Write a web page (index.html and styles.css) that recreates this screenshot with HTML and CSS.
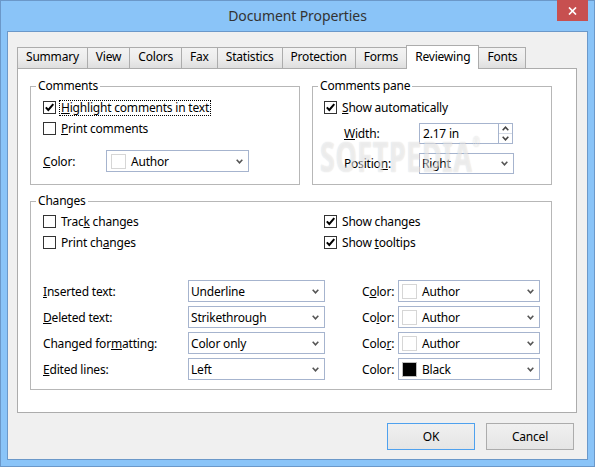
FILE: index.html
```html
<!DOCTYPE html>
<html lang="en">
<head>
  <meta charset="UTF-8" />
  <title>Document Properties</title>
  <link rel="stylesheet" href="styles.css">
</head>
<body>
  <div class="window">
    <div class="titlebar">
      <span class="title">Document Properties</span>
      <div class="close">
        <svg width="9" height="8" viewBox="0 0 9 8"><path d="M1 0.5 L8 7.5 M8 0.5 L1 7.5" stroke="#fff" stroke-width="1.7" fill="none"/></svg>
      </div>
    </div>

    <div class="client">
      <div class="tabs">
        <div class="tab">Summary</div>
        <div class="tab">View</div>
        <div class="tab">Colors</div>
        <div class="tab">Fax</div>
        <div class="tab">Statistics</div>
        <div class="tab">Protection</div>
        <div class="tab">Forms</div>
        <div class="tab active">Reviewing</div>
        <div class="tab">Fonts</div>
      </div>

      <div class="panel">
        <div class="top-row">
          <fieldset class="group group-comments">
            <legend>Comments</legend>
            <div class="comments-body">
              <div class="check-row">
                <span class="check on"><svg width="11" height="11" viewBox="0 0 11 11"><path d="M1.8 5.4 L4.3 8 L9.3 2.2" stroke="#000" stroke-width="2" fill="none"/></svg></span>
                <span class="check-label focus"><u>H</u>ighlight comments in text</span>
              </div>
              <div class="check-row">
                <span class="check"></span>
                <span class="check-label"><u>P</u>rint comments</span>
              </div>
              <div class="field-row color-row">
                <span class="field-label comments-label"><u>C</u>olor:</span>
                <div class="combo combo-wide">
                  <span class="swatch"></span>
                  <span>Author</span>
                  <svg class="chev" width="7" height="5" viewBox="0 0 7 5"><path d="M0.7 0.8 L3.5 3.8 L6.3 0.8" stroke="#555" stroke-width="1.6" fill="none"/></svg>
                </div>
              </div>
            </div>
          </fieldset>

          <fieldset class="group group-pane">
            <legend>Comments pane</legend>
            <div class="pane-body">
              <div class="check-row">
                <span class="check on"><svg width="11" height="11" viewBox="0 0 11 11"><path d="M1.8 5.4 L4.3 8 L9.3 2.2" stroke="#000" stroke-width="2" fill="none"/></svg></span>
                <span class="check-label"><u>S</u>how automatically</span>
              </div>
              <div class="field-row width-row">
                <span class="field-label pane-label"><u>W</u>idth:</span>
                <div class="spin">
                  <span class="spin-text">2.17 in</span>
                  <div class="spin-btns">
                    <span class="spin-up"><svg width="7" height="5" viewBox="0 0 7 5"><path d="M0.7 4.2 L3.5 1.2 L6.3 4.2" stroke="#444" stroke-width="1.6" fill="none"/></svg></span>
                    <span class="spin-down"><svg width="7" height="5" viewBox="0 0 7 5"><path d="M0.7 0.8 L3.5 3.8 L6.3 0.8" stroke="#444" stroke-width="1.6" fill="none"/></svg></span>
                  </div>
                </div>
              </div>
              <div class="field-row position-row">
                <span class="field-label pane-label">Positio<u>n</u>:</span>
                <div class="combo combo-pos">
                  <span>Right</span>
                  <svg class="chev" width="7" height="5" viewBox="0 0 7 5"><path d="M0.7 0.8 L3.5 3.8 L6.3 0.8" stroke="#555" stroke-width="1.6" fill="none"/></svg>
                </div>
              </div>
            </div>
          </fieldset>
        </div>

        <fieldset class="group group-changes">
          <legend>Changes</legend>
          <div class="changes-body">
            <div class="check-grid">
              <div class="check-row">
                <span class="check"></span>
                <span class="check-label">Trac<u>k</u> changes</span>
              </div>
              <div class="check-row">
                <span class="check on"><svg width="11" height="11" viewBox="0 0 11 11"><path d="M1.8 5.4 L4.3 8 L9.3 2.2" stroke="#000" stroke-width="2" fill="none"/></svg></span>
                <span class="check-label">Show changes</span>
              </div>
              <div class="check-row">
                <span class="check"></span>
                <span class="check-label">Print ch<u>a</u>nges</span>
              </div>
              <div class="check-row">
                <span class="check on"><svg width="11" height="11" viewBox="0 0 11 11"><path d="M1.8 5.4 L4.3 8 L9.3 2.2" stroke="#000" stroke-width="2" fill="none"/></svg></span>
                <span class="check-label">Show <u>t</u>ooltips</span>
              </div>
            </div>

            <div class="format-grid">
              <span class="field-label"><u>I</u>nserted text:</span>
              <div class="combo"><span>Underline</span><svg class="chev" width="7" height="5" viewBox="0 0 7 5"><path d="M0.7 0.8 L3.5 3.8 L6.3 0.8" stroke="#555" stroke-width="1.6" fill="none"/></svg></div>
              <span class="field-label color-label">C<u>o</u>lor:</span>
              <div class="combo"><span class="swatch"></span><span>Author</span><svg class="chev" width="7" height="5" viewBox="0 0 7 5"><path d="M0.7 0.8 L3.5 3.8 L6.3 0.8" stroke="#555" stroke-width="1.6" fill="none"/></svg></div>

              <span class="field-label"><u>D</u>eleted text:</span>
              <div class="combo"><span>Strikethrough</span><svg class="chev" width="7" height="5" viewBox="0 0 7 5"><path d="M0.7 0.8 L3.5 3.8 L6.3 0.8" stroke="#555" stroke-width="1.6" fill="none"/></svg></div>
              <span class="field-label color-label">Co<u>l</u>or:</span>
              <div class="combo"><span class="swatch"></span><span>Author</span><svg class="chev" width="7" height="5" viewBox="0 0 7 5"><path d="M0.7 0.8 L3.5 3.8 L6.3 0.8" stroke="#555" stroke-width="1.6" fill="none"/></svg></div>

              <span class="field-label">Changed for<u>m</u>atting:</span>
              <div class="combo"><span>Color only</span><svg class="chev" width="7" height="5" viewBox="0 0 7 5"><path d="M0.7 0.8 L3.5 3.8 L6.3 0.8" stroke="#555" stroke-width="1.6" fill="none"/></svg></div>
              <span class="field-label color-label">Colo<u>r</u>:</span>
              <div class="combo"><span class="swatch"></span><span>Author</span><svg class="chev" width="7" height="5" viewBox="0 0 7 5"><path d="M0.7 0.8 L3.5 3.8 L6.3 0.8" stroke="#555" stroke-width="1.6" fill="none"/></svg></div>

              <span class="field-label"><u>E</u>dited lines:</span>
              <div class="combo"><span>Left</span><svg class="chev" width="7" height="5" viewBox="0 0 7 5"><path d="M0.7 0.8 L3.5 3.8 L6.3 0.8" stroke="#555" stroke-width="1.6" fill="none"/></svg></div>
              <span class="field-label color-label">Color:</span>
              <div class="combo"><span class="swatch black"></span><span>Black</span><svg class="chev" width="7" height="5" viewBox="0 0 7 5"><path d="M0.7 0.8 L3.5 3.8 L6.3 0.8" stroke="#555" stroke-width="1.6" fill="none"/></svg></div>
            </div>
          </div>
        </fieldset>

        <div class="watermark">SOFTPEDIA<span class="reg">®</span></div>
      </div>

      <div class="buttons">
        <div class="btn default">OK</div>
        <div class="btn">Cancel</div>
      </div>
    </div>
  </div>
</body>
</html>
```

FILE: styles.css
```css
* {
  box-sizing: border-box;
}

body {
  margin: 0;
  font-family: "Noto Sans", sans-serif;
  font-size: 12px;
  letter-spacing: -0.2px;
  color: #000;
}

u {
  text-decoration: underline;
  text-underline-offset: 1px;
}

/* window frame */

.window {
  position: relative;
  width: 595px;
  height: 467px;
  border: 1px solid #6b98c9;
  background: #8ac4f8;
  display: flex;
  flex-direction: column;
}

.titlebar {
  flex: none;
  height: 30px;
  line-height: 30px;
  text-align: center;
  font-size: 14px;
  letter-spacing: -0.1px;
  color: #333;
}

.close {
  position: absolute;
  top: -1px;
  right: 6px;
  width: 31px;
  height: 21px;
  background: #c75050;
  display: flex;
  align-items: center;
  justify-content: center;
}

.client {
  flex: 1;
  margin: 0 6px 6px;
  border: 1px solid #6b98c9;
  background: #f0f0f0;
  padding: 13px 10px 9px 9px;
  display: flex;
  flex-direction: column;
}

/* tabs */

.tabs {
  display: flex;
  align-items: flex-end;
  height: 24px;
  margin-bottom: -1px;
}

.tab {
  height: 21px;
  line-height: 18px;
  padding: 0 8px;
  margin-left: -1px;
  margin-bottom: 1px;
  border: 1px solid #acacac;
  border-bottom: none;
  background: linear-gradient(#f3f3f3 0%, #ececec 55%, #dedede 100%);
}

.tab:first-child {
  margin-left: 0;
}

.tab.active {
  position: relative;
  z-index: 2;
  height: 24px;
  padding-top: 2px;
  margin-bottom: 0;
  background: #fff;
}

.panel {
  position: relative;
  height: 345px;
  background: #fff;
  border: 1px solid #acacac;
  padding: 9px 24px 0 12px;
}

/* group boxes */

.top-row {
  display: flex;
  gap: 12px;
}

.group {
  margin: 0;
  padding: 0;
  min-width: 0;
  border: 1px solid #b7b7b7;
}

.group legend {
  margin-left: 5px;
  padding: 0 2px;
  line-height: 16px;
}

.group-comments {
  width: 270px;
}

.group-pane {
  width: 240px;
}

.group-changes {
  margin-top: 8px;
}

.comments-body {
  padding: 3px 0 12px 12px;
}

.pane-body {
  padding: 3px 0 10px 11px;
}

.changes-body {
  padding: 2px 0 9px 12px;
}

/* checkboxes */

.check-row {
  display: flex;
  align-items: center;
  height: 21px;
}

.check {
  flex: none;
  width: 13px;
  height: 13px;
  border: 1px solid #333;
  background: #fff;
  display: flex;
  align-items: center;
  justify-content: center;
}

.check-label {
  margin-left: 3px;
  padding: 0 1px;
  line-height: 14px;
  border: 1px dotted transparent;
  white-space: nowrap;
}

.check-label.focus {
  border-color: #000;
}

.check-grid {
  display: grid;
  grid-template-columns: 281px auto;
}

/* fields */

.field-row {
  display: flex;
  align-items: center;
}

.field-label {
  white-space: nowrap;
}

.comments-label {
  width: 63px;
}

.pane-label {
  width: 95px;
  padding-left: 20px;
}

.color-row {
  margin-top: 11px;
}

.width-row {
  margin-top: 5px;
}

.position-row {
  margin-top: 9px;
}

.combo {
  height: 22px;
  border: 1px solid #a6b4ce;
  background: #fff;
  display: flex;
  align-items: center;
  padding: 0 5px 0 2px;
  white-space: nowrap;
}

.combo .chev {
  margin-left: auto;
  flex: none;
}

.combo-wide {
  width: 143px;
  padding-left: 3px;
}

.combo-pos {
  width: 95px;
  height: 21px;
}

.swatch {
  flex: none;
  width: 15px;
  height: 15px;
  margin-left: 1px;
  margin-right: 5px;
  border: 1px solid #d6d6d6;
  background: #fff;
}

.swatch.black {
  background: #000;
  border-color: #bdbdbd;
}

.spin {
  width: 94px;
  height: 21px;
  border: 1px solid #a6b4ce;
  background: #fff;
  display: flex;
}

.spin-text {
  flex: 1;
  padding-left: 3px;
  line-height: 19px;
}

.spin-btns {
  width: 14px;
  border-left: 1px solid #a6b4ce;
  display: flex;
  flex-direction: column;
}

.spin-btns span {
  flex: 1;
  display: flex;
  align-items: center;
  justify-content: center;
}

.spin-down {
  border-top: 1px solid #d5dbe6;
}

.format-grid {
  margin-top: 27px;
  display: grid;
  grid-template-columns: 145px 137px 73px 142px;
  grid-auto-rows: 22px;
  row-gap: 4px;
  align-items: center;
}

.format-grid .color-label {
  padding-left: 37px;
}

/* watermark over the comments pane */

.watermark {
  position: absolute;
  left: 302px;
  top: 66px;
  font-size: 42px;
  line-height: 1;
  font-weight: bold;
  letter-spacing: 1px;
  color: rgba(255, 255, 255, 0.55);
  text-shadow: 0 0 1.5px rgba(0, 0, 0, 0.16);
  transform: scaleX(0.64);
  transform-origin: left top;
  pointer-events: none;
}

.watermark .reg {
  font-size: 14px;
  vertical-align: top;
}

/* buttons */

.buttons {
  display: flex;
  justify-content: flex-end;
  gap: 11px;
  margin-top: 10px;
  padding-right: 3px;
}

.btn {
  width: 88px;
  height: 27px;
  border: 1px solid #acacac;
  background: linear-gradient(#f0f0f0, #e5e5e5);
  display: flex;
  align-items: center;
  justify-content: center;
}

.btn.default {
  border-color: #4fa1ee;
}
```
